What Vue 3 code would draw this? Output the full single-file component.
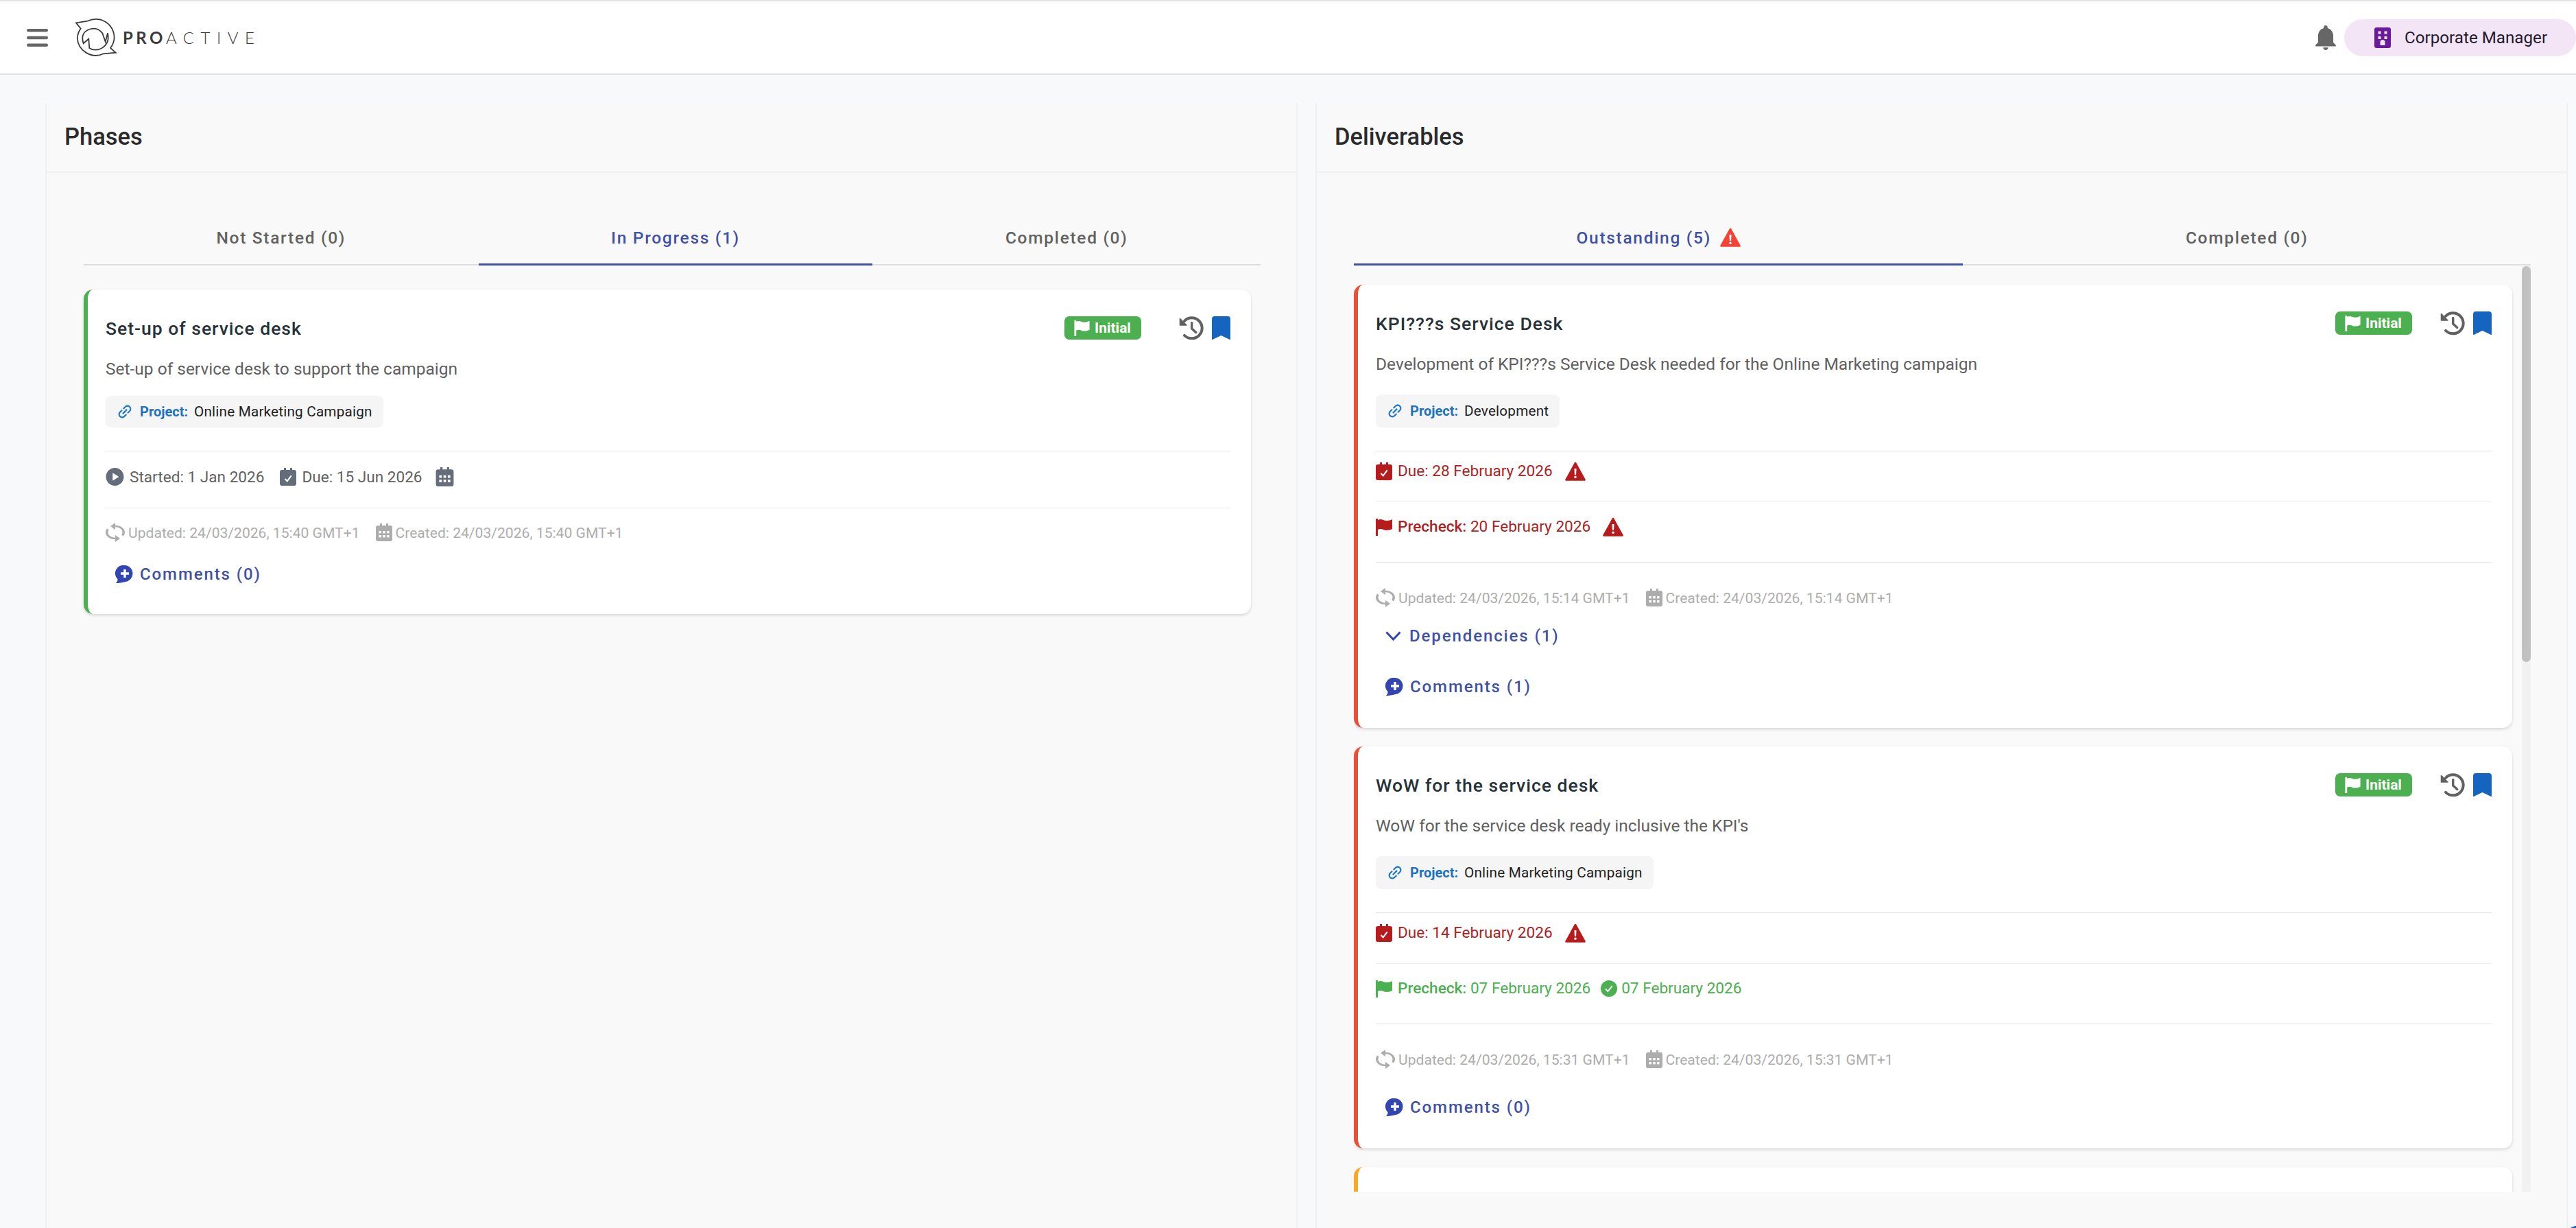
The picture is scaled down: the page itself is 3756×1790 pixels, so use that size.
<template>
  <div class="page">
    <!-- icon sprite -->
    <svg class="sprite" xmlns="http://www.w3.org/2000/svg">
      <symbol id="i-play" viewBox="2 2 20 20"><path fill="currentColor" d="M12 2C6.48 2 2 6.48 2 12s4.48 10 10 10 10-4.48 10-10S17.52 2 12 2zM9.5 16.5v-9l7 4.5-7 4.5z" /></symbol>
      <symbol id="i-due" viewBox="0 0 24 26">
        <path fill="currentColor" d="M6 0h3v3h6V0h3v3h3a3 3 0 0 1 3 3v17a3 3 0 0 1-3 3H3a3 3 0 0 1-3-3V6a3 3 0 0 1 3-3h3z" />
        <path fill="none" stroke="#fff" stroke-width="2" d="M7.5 16l3.2 3.4 6-8" />
      </symbol>
      <symbol id="i-cal" viewBox="0 0 24 26">
        <path fill="currentColor" d="M6 0h3v3h6V0h3v3h3a3 3 0 0 1 3 3v17a3 3 0 0 1-3 3H3a3 3 0 0 1-3-3V6a3 3 0 0 1 3-3h3z" />
        <g fill="#fff"><rect x="4.5" y="11" width="3.4" height="3.4" /><rect x="10.3" y="11" width="3.4" height="3.4" /><rect x="16.1" y="11" width="3.4" height="3.4" /><rect x="4.5" y="17" width="3.4" height="3.4" /><rect x="10.3" y="17" width="3.4" height="3.4" /><rect x="16.1" y="17" width="3.4" height="3.4" /></g>
      </symbol>
      <symbol id="i-sync" viewBox="4 1 16 22" preserveAspectRatio="none"><path fill="currentColor" d="M12 4V1L8 5l4 4V6c3.31 0 6 2.69 6 6 0 1.01-.25 1.97-.7 2.8l1.46 1.46C19.54 15.03 20 13.57 20 12c0-4.42-3.58-8-8-8zm0 14c-3.31 0-6-2.69-6-6 0-1.01.25-1.97.7-2.8L5.24 7.74C4.46 8.97 4 10.43 4 12c0 4.42 3.58 8 8 8v3l4-4-4-4v3z" /></symbol>
      <symbol id="i-link" viewBox="2 2 20 20"><path fill="currentColor" transform="rotate(-45 12 12)" d="M3.9 12c0-1.71 1.39-3.1 3.1-3.1h4V7H7c-2.76 0-5 2.24-5 5s2.24 5 5 5h4v-1.9H7c-1.71 0-3.1-1.39-3.1-3.1zM8 13h8v-2H8v2zm9-6h-4v1.9h4c1.71 0 3.1 1.39 3.1 3.1s-1.39 3.1-3.1 3.1h-4V17h4c2.76 0 5-2.24 5-5s-2.24-5-5-5z" /></symbol>
      <symbol id="i-flag" viewBox="0 0 24 26"><path fill="currentColor" d="M0 1h3v25H0zM3 3c3-1.5 5.5-1 8 0 3.500 1.400 8 1.500 13-1v14c-5 2.500-9.500 2.400-13 1-2.500-1-5-1.500-8 0z" /></symbol>
      <symbol id="i-warn" viewBox="0 0 30 28">
        <path fill="currentColor" stroke="currentColor" stroke-width="2.600" stroke-linejoin="round" d="M15 2 L28.500 26.500 H1.500 Z" />
        <path fill="#fff" d="M13.500 10h3l-.4 9h-2.200z" /><circle cx="15" cy="22.300" r="1.700" fill="#fff" />
      </symbol>
      <symbol id="i-comment" viewBox="0 0 26 26">
        <path fill="currentColor" d="M14 0a12 12 0 0 1 1 23.900C11 25 5 26 1 26c1.500-1.500 2.400-3 2.600-5.500A12 12 0 0 1 14 0z" />
        <path fill="#fff" d="M12.300 6h3.400v4.300H20v3.400h-4.300V18h-3.400v-4.300H8v-3.400h4.300z" />
      </symbol>
      <symbol id="i-check" viewBox="0 0 24 24">
        <circle cx="12" cy="12" r="12" fill="currentColor" />
        <path fill="none" stroke="#fff" stroke-width="2" d="M7 12.500l3.400 3.600 6.400-8" />
      </symbol>
      <symbol id="i-history" viewBox="0 0 36 36">
        <path fill="none" stroke="currentColor" stroke-width="4" stroke-linecap="round" d="M8 7.800A15 15 0 1 1 8 28.900" />
        <path fill="currentColor" stroke="currentColor" stroke-width="1.500" stroke-linejoin="round" d="M1.500 4.500v9.500h9.500z" />
        <path fill="none" stroke="currentColor" stroke-width="3.400" stroke-linecap="round" stroke-linejoin="round" d="M18.700 10.500v8.500l6 5.500" />
      </symbol>
      <symbol id="i-bookmark" viewBox="0 0 27 34"><path fill="currentColor" d="M4 0h19a4 4 0 0 1 4 4v29a1 1 0 0 1-1.500.8L13.500 28 1.500 33.800A1 1 0 0 1 0 33V4a4 4 0 0 1 4-4z" /></symbol>
    </svg>

    <header class="topbar">
      <div class="topbar-left">
        <svg class="menu-icon" viewBox="0 0 31 26">
          <rect x="0" y="0" width="31" height="4.600" rx="2.300" />
          <rect x="0" y="10.700" width="31" height="4.600" rx="2.300" />
          <rect x="0" y="21.400" width="31" height="4.600" rx="2.300" />
        </svg>
        <div class="logo">
          <svg class="logo-mark" viewBox="0 0 62 58">
            <path d="M2 7.300 18.700 4.700A27 27 0 0 1 57.700 29 27 27 0 0 1 52 44L59.700 50.700 42 52.300A27 27 0 0 1 3.700 29 27 27 0 0 1 8.700 15.700Z" />
            <path d="M40.300 22.300C36 17.500 32 15.700 28.700 15.700 19 15.700 11.300 21 11.300 29 11.300 32 11.700 35 12.700 37.300L20.300 30.700 21.300 44C24 46 27 46.700 30 46.700 41 46.700 48.700 38 48.700 29 48.700 27 48.500 25 48 22.300L44.700 35Z" />
          </svg>
          <span class="logo-text"><b>PRO</b><span>ACTIVE</span></span>
        </div>
      </div>
      <div class="topbar-right">
        <svg class="bell-icon" viewBox="4 2.500 16 19.500"><path d="M12 22c1.100 0 2-.9 2-2h-4c0 1.100.89 2 2 2zm6-6v-5c0-3.070-1.640-5.640-4.500-6.320V4c0-.83-.67-1.500-1.500-1.500s-1.500.67-1.500 1.500v.68C7.630 5.360 6 7.920 6 11v5l-2 2v1h16v-1l-2-2z" /></svg>
        <div class="role-pill">
          <svg class="role-icon" viewBox="0 0 24 30">
            <rect width="24" height="30" rx="3" fill="#6a1b9a" />
            <g fill="#f3e5f5"><rect x="5.500" y="5.500" width="4" height="4" /><rect x="14.500" y="5.500" width="4" height="4" /><rect x="5.500" y="13" width="4" height="4" /><rect x="14.500" y="13" width="4" height="4" /><path d="M8.500 26v-4.500a3.500 3.500 0 0 1 7 0V26z" /></g>
          </svg>
          <span>Corporate Manager</span>
        </div>
      </div>
    </header>

    <main class="panels">
      <section class="panel">
        <h2 class="panel-title">Phases</h2>
        <div class="panel-body">
          <div class="tabs">
            <div v-for="tab in phaseTabs" :key="tab.label" class="tab" :class="{ active: tab.active }">{{ tab.label }}</div>
          </div>
          <article class="card card-phase border-green">
            <div class="card-head">
              <h3>Set-up of service desk</h3>
              <div class="head-actions">
                <span class="badge"><svg class="badge-flag"><use href="#i-flag" /></svg>Initial</span>
                <svg class="history-icon"><use href="#i-history" /></svg>
                <svg class="bookmark-icon"><use href="#i-bookmark" /></svg>
              </div>
            </div>
            <p class="card-desc">Set-up of service desk to support the campaign</p>
            <div class="chip">
              <svg class="chip-icon"><use href="#i-link" /></svg>
              <b>Project:</b><span>Online Marketing Campaign</span>
            </div>
            <div class="row row-dates">
              <svg class="ic ic-round"><use href="#i-play" /></svg><span>Started: 1 Jan 2026</span>
              <svg class="ic ic-spaced"><use href="#i-due" /></svg><span>Due: 15 Jun 2026</span>
              <svg class="ic ic-spaced ic-cal-big"><use href="#i-cal" /></svg>
            </div>
            <div class="row row-meta">
              <svg class="ic ic-sync"><use href="#i-sync" /></svg><span>Updated: 24/03/2026, 15:40 GMT+1</span>
              <svg class="ic ic-spaced"><use href="#i-cal" /></svg><span>Created: 24/03/2026, 15:40 GMT+1</span>
            </div>
            <div class="link-btn">
              <svg class="comment-icon"><use href="#i-comment" /></svg>Comments (0)
            </div>
          </article>
        </div>
      </section>

      <section class="panel">
        <h2 class="panel-title">Deliverables</h2>
        <div class="panel-body">
          <div class="tabs">
            <div class="tab active">Outstanding (5)<svg class="tab-warn"><use href="#i-warn" /></svg></div>
            <div class="tab">Completed (0)</div>
          </div>
          <div class="list-wrap">
            <div class="list">
              <article v-for="item in deliverables" :key="item.title" class="card border-red">
                <div class="card-head">
                  <h3>{{ item.title }}</h3>
                  <div class="head-actions">
                    <span class="badge"><svg class="badge-flag"><use href="#i-flag" /></svg>Initial</span>
                    <svg class="history-icon"><use href="#i-history" /></svg>
                    <svg class="bookmark-icon"><use href="#i-bookmark" /></svg>
                  </div>
                </div>
                <p class="card-desc">{{ item.desc }}</p>
                <div class="chip">
                  <svg class="chip-icon"><use href="#i-link" /></svg>
                  <b>Project:</b><span>{{ item.project }}</span>
                </div>
                <div class="row row-due late">
                  <svg class="ic"><use href="#i-due" /></svg><span>Due: {{ item.due }}</span>
                  <svg class="ic-warn"><use href="#i-warn" /></svg>
                </div>
                <div class="row row-pre" :class="item.preDone ? 'done' : 'late'">
                  <svg class="ic"><use href="#i-flag" /></svg>
                  <span><b>Precheck:</b> {{ item.precheck }}</span>
                  <template v-if="item.preDone">
                    <svg class="ic-check"><use href="#i-check" /></svg><span>{{ item.preDone }}</span>
                  </template>
                  <svg v-else class="ic-warn"><use href="#i-warn" /></svg>
                </div>
                <div class="row row-meta row-meta-lined">
                  <svg class="ic ic-sync"><use href="#i-sync" /></svg><span>Updated: {{ item.stamp }}</span>
                  <svg class="ic ic-spaced"><use href="#i-cal" /></svg><span>Created: {{ item.stamp }}</span>
                </div>
                <div v-if="item.deps" class="link-btn link-deps">
                  <svg class="chevron" viewBox="0 0 23 14"><path d="M1.500 1.500 11.500 12l10-10.500" /></svg>Dependencies ({{ item.deps }})
                </div>
                <div class="link-btn link-comments" :class="{ 'after-deps': item.deps }">
                  <svg class="comment-icon"><use href="#i-comment" /></svg>Comments ({{ item.comments }})
                </div>
              </article>
              <article class="card border-amber card-clipped"></article>
            </div>
            <div class="scroll-track"><div class="scroll-thumb"></div></div>
          </div>
        </div>
      </section>
    </main>

    <div class="fab"></div>
  </div>
</template>

<script setup>
const phaseTabs = [
  { label: 'Not Started (0)' },
  { label: 'In Progress (1)', active: true },
  { label: 'Completed (0)' },
]

const deliverables = [
  {
    title: 'KPI???s Service Desk',
    desc: 'Development of KPI???s Service Desk needed for the Online Marketing campaign',
    project: 'Development',
    due: '28 February 2026',
    precheck: '20 February 2026',
    stamp: '24/03/2026, 15:14 GMT+1',
    deps: 1,
    comments: 1,
  },
  {
    title: 'WoW for the service desk',
    desc: "WoW for the service desk ready inclusive the KPI's",
    project: 'Online Marketing Campaign',
    due: '14 February 2026',
    precheck: '07 February 2026',
    preDone: '07 February 2026',
    stamp: '24/03/2026, 15:31 GMT+1',
    comments: 0,
  },
]
</script>

<style>
html,
body {
  margin: 0;
  background: #f8f9fb;
}
</style>

<style scoped>
.page {
  height: 1790px;
  overflow: hidden;
  display: flex;
  flex-direction: column;
  position: relative;
  background: #f8f9fb;
  font-family: Roboto, "Liberation Sans", sans-serif;
  color: #212121;
}

.sprite {
  display: none;
}

/* Top bar */
.topbar {
  flex: 0 0 auto;
  height: 109px;
  box-sizing: border-box;
  border-top: 2px solid #e4e4e4;
  border-bottom: 2px solid #e2e2e2;
  background: #fff;
  display: flex;
  justify-content: space-between;
  align-items: center;
}

.topbar-left {
  display: flex;
  align-items: center;
  padding-left: 39px;
}

.menu-icon {
  width: 31px;
  height: 26px;
  fill: #666;
}

.logo {
  display: flex;
  align-items: center;
  margin-left: 39px;
}

.logo-mark {
  width: 62px;
  height: 58px;
  fill: none;
  stroke: #3a3a3a;
  stroke-width: 1.800;
}

.logo-text {
  margin-left: 8px;
  font-family: Lato, sans-serif;
  font-size: 24px;
  color: #3a3a3a;
}

.logo-text b {
  font-weight: 700;
  letter-spacing: 4.500px;
}

.logo-text span {
  font-weight: 300;
  letter-spacing: 9.500px;
}

.topbar-right {
  display: flex;
  align-items: center;
}

.bell-icon {
  width: 30px;
  height: 36px;
  fill: #666;
}

.role-pill {
  width: 338px;
  height: 54px;
  margin-left: 12px;
  box-sizing: border-box;
  padding-left: 44px;
  display: flex;
  align-items: center;
  gap: 20px;
  border-radius: 27px;
  background: #f3e5f5;
  font-size: 24.200px;
  color: #1f1a2e;
}

.role-icon {
  width: 24px;
  height: 30px;
}

/* Panels */
.panels {
  flex: 1 1 auto;
  min-height: 0;
  padding: 41px 12px 0 66px;
  display: grid;
  grid-template-columns: 1fr 1fr;
  gap: 26px;
}

.panel {
  min-width: 0;
  background: #f9f9f9;
  border-left: 2px solid #f0f0f1;
  border-right: 2px solid #f0f0f1;
  box-sizing: border-box;
}

.panel-title {
  margin: 0;
  height: 102px;
  box-sizing: border-box;
  padding: 28px 0 0 26px;
  border-bottom: 2px solid #f0f0f0;
  font-size: 34.500px;
  line-height: 42px;
  font-weight: 500;
  color: #2a2a2a;
}

.panel-body {
  padding: 51px 52px 0 54px;
}

.tabs {
  display: flex;
  height: 84px;
  box-sizing: border-box;
  border-bottom: 2px solid #dedede;
}

.tab {
  flex: 1 1 auto;
  display: flex;
  align-items: center;
  justify-content: center;
  height: 84px;
  box-sizing: border-box;
  padding-top: 2px;
  font-size: 24.500px;
  font-weight: 500;
  letter-spacing: 1.700px;
  color: #616161;
}

.tab.active {
  padding-top: 5px;
  color: #3f51a5;
  border-bottom: 3px solid #3f51a5;
}

.tab-warn {
  width: 30px;
  height: 28px;
  margin-left: 13px;
  color: #f44336;
}

/* Cards */
.card {
  box-sizing: border-box;
  background: #fff;
  border-left: 6px solid #ccc;
  border-radius: 14px;
  box-shadow: 0 2px 4px rgba(0, 0, 0, 0.14);
  padding: 32px 30px 36px 26px;
}

.border-green {
  border-left-color: #4caf50;
}

.border-red {
  border-left-color: #e8503a;
}

.border-amber {
  border-left-color: #f9a825;
}

.card-phase {
  margin: 35px 14px 0 0;
  padding-bottom: 34px;
}

.card-clipped {
  height: 300px;
  padding: 0;
}

.card-head {
  height: 48px;
  display: flex;
  align-items: center;
  justify-content: space-between;
}

.card-head h3 {
  margin: 0;
  font-size: 26.500px;
  font-weight: 500;
  letter-spacing: 1px;
  color: #263238;
}

.head-actions {
  display: flex;
  align-items: center;
}

.badge {
  width: 112px;
  height: 34px;
  box-sizing: border-box;
  padding-left: 14px;
  display: flex;
  align-items: center;
  gap: 7px;
  border-radius: 7px;
  background: #4caf50;
  color: #fff;
  font-size: 21px;
  font-weight: 700;
}

.badge-flag {
  width: 23px;
  height: 24px;
}

.history-icon {
  width: 36px;
  height: 36px;
  margin-left: 41px;
  color: #616161;
}

.card-phase .history-icon {
  margin-left: 55px;
}

.bookmark-icon {
  width: 27px;
  height: 34px;
  margin-left: 12px;
  color: #1565c0;
}

.card-desc {
  margin: 18px 0 0;
  height: 36px;
  font-size: 24.500px;
  line-height: 36px;
  color: #5f5f5f;
}

.chip {
  display: inline-flex;
  align-items: center;
  height: 48px;
  margin-top: 26px;
  padding: 0 16px 0 17px;
  border-radius: 8px;
  background: #f5f5f5;
  font-size: 20.700px;
  letter-spacing: 0.200px;
  color: #212121;
}

.chip b {
  margin: 0 9px 0 11px;
  font-size: 20px;
  letter-spacing: 0;
  font-weight: 700;
  color: #1e73be;
}

.chip-icon {
  width: 22px;
  height: 22px;
  color: #1976d2;
}

.row {
  display: flex;
  align-items: center;
  font-size: 22.600px;
  color: #616161;
}

.row > span {
  margin-left: 8px;
  white-space: nowrap;
}

.ic {
  width: 24px;
  height: 26px;
  flex: 0 0 auto;
  color: #656d7b;
}

.ic-round {
  width: 27px;
}

.ic-spaced {
  margin-left: 23px;
}

.ic-cal-big {
  width: 27px;
  height: 28px;
  margin-left: 19px;
}

.ic-sync {
  width: 28px;
  height: 28px;
}

/* Rows of the phase card */
.card-phase .chip {
  height: 46px;
  margin-top: 21px;
}

.row-dates {
  height: 74px;
  margin-top: 34px;
  padding-bottom: 8px;
  box-sizing: content-box;
  border-top: 1px solid #e8e8e8;
  border-bottom: 1px solid #e8e8e8;
}

.row-meta {
  height: 28px;
  margin-top: 21px;
  color: #adadad;
  font-size: 21.100px;
}

.row-meta > span {
  margin-left: 5px;
}

.row-meta .ic {
  color: #adadad;
}

.link-btn {
  display: flex;
  align-items: center;
  height: 48px;
  margin-top: 23px;
  padding-left: 14px;
  font-size: 24px;
  font-weight: 500;
  letter-spacing: 1.900px;
  color: #3f51a5;
}

.comment-icon {
  width: 26px;
  height: 26px;
  margin-right: 10px;
  color: #3346b0;
}

.chevron {
  width: 23px;
  height: 14px;
  margin-right: 12px;
  fill: none;
  stroke: #3346b0;
  stroke-width: 3;
}

/* Rows of the deliverable cards */
.row-due {
  height: 74px;
  margin-top: 34px;
  padding-bottom: 16px;
  box-sizing: border-box;
  border-top: 1px solid #e2e2e2;
}

.row-pre {
  height: 89px;
  padding-bottom: 16px;
  box-sizing: border-box;
  border-top: 1px solid #ededed;
  border-bottom: 1px solid #e2e2e2;
}

.row-meta-lined {
  margin-top: 37px;
}

.link-deps {
  margin-top: 18px;
}

.link-comments {
  margin-top: 32px;
}

.link-comments.after-deps {
  margin-top: 26px;
}

.late {
  color: #ab2323;
}

.late .ic {
  color: #b71c1c;
}

.done,
.done .ic {
  color: #4caf50;
}

.row b {
  font-weight: 500;
}

.ic-warn {
  width: 30px;
  height: 28px;
  margin-left: 18px;
  color: #b71c1c;
}

.ic-check {
  width: 24px;
  height: 24px;
  margin-left: 15px;
  color: #4caf50;
}

.row-pre .ic-check + span {
  margin-left: 6px;
}

/* Scrollable list */
.list-wrap {
  display: flex;
  height: 1349px;
  margin-top: 1px;
}

.list {
  flex: 1 1 auto;
  min-width: 0;
  padding-top: 27px;
  padding-right: 14px;
  display: flex;
  flex-direction: column;
  gap: 27px;
  overflow: hidden;
}

.list .card {
  flex: 0 0 auto;
}

.scroll-track {
  flex: 0 0 13px;
  background: #f1f1f1;
}

.scroll-thumb {
  height: 577px;
  border-radius: 7px;
  background: #c1c1c1;
}

.fab {
  position: fixed;
  left: 3723px;
  top: 1785px;
  width: 90px;
  height: 90px;
  border-radius: 50%;
  background: #1565c0;
}
</style>
